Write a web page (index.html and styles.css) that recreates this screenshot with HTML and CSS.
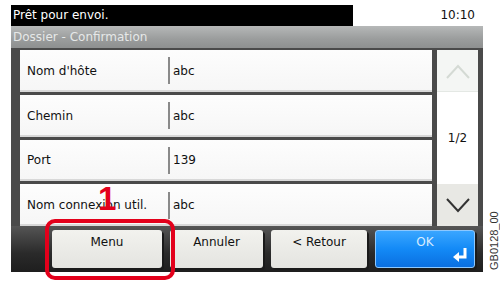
FILE: index.html
```html
<!DOCTYPE html>
<html lang="fr">
<head>
<meta charset="utf-8">
<link rel="stylesheet" href="styles.css">
</head>
<body>
<div class="page">
  <div class="screen">
    <div class="status">
      <div class="status-msg">Prêt pour envoi.</div>
      <div class="clock">10:10</div>
    </div>
    <div class="title">Dossier - Confirmation</div>
    <div class="body">
      <div class="rows">
        <div class="row"><span class="label">Nom d'hôte</span><span class="sep"></span><span class="value">abc</span></div>
        <div class="row"><span class="label">Chemin</span><span class="sep"></span><span class="value">abc</span></div>
        <div class="row"><span class="label">Port</span><span class="sep"></span><span class="value">139</span></div>
        <div class="row"><span class="label">Nom connexion util.</span><span class="sep"></span><span class="value">abc</span></div>
      </div>
      <div class="scroll">
        <div class="sbtn up">
          <svg width="24" height="16" viewBox="0 0 24 16"><polyline points="1,15 12,3 23,15" fill="none" stroke="#d4dad4" stroke-width="2"/></svg>
        </div>
        <div class="pager">1/2</div>
        <div class="sbtn down">
          <svg width="24" height="16" viewBox="0 0 24 16"><polyline points="1,2 12,14 23,2" fill="none" stroke="#333" stroke-width="2"/></svg>
        </div>
      </div>
    </div>
    <div class="footer">
      <div class="btn btn-menu">Menu</div>
      <div class="btn btn-cancel">Annuler</div>
      <div class="btn btn-back">&lt; Retour</div>
      <div class="btn btn-ok">OK
        <svg class="enter" width="16" height="14" viewBox="0 0 16 14"><path d="M13 0 V9 H6" fill="none" stroke="#fff" stroke-width="3"/><polygon points="1,9 7,4 7,14" fill="#fff"/></svg>
      </div>
    </div>
  </div>
  <div class="callout-num">1</div>
  <div class="callout-box"></div>
  <div class="code">GB0128_00</div>
</div>
</body>
</html>
```
FILE: styles.css
```css
html, body {
  margin: 0;
  padding: 0;
  background: #fff;
}
.page {
  position: relative;
  width: 500px;
  height: 282px;
  overflow: hidden;
  font-family: "DejaVu Sans", Verdana, sans-serif;
  font-size: 12px;
  color: #111;
}
.screen {
  position: absolute;
  left: 11px;
  top: 5px;
  width: 472px;
  display: flex;
  flex-direction: column;
}
.status {
  height: 21px;
  display: flex;
  align-items: stretch;
}
.status-msg {
  width: 342px;
  background: #000;
  color: #fff;
  padding-left: 2px;
  line-height: 21px;
  box-sizing: border-box;
}
.clock {
  flex: 1;
  text-align: right;
  padding-right: 8px;
  line-height: 21px;
  color: #111;
}
.title {
  height: 22px;
  line-height: 22px;
  padding-left: 2px;
  color: #e6e8e8;
  background: linear-gradient(#b6b8b8, #9a9c9c 60%, #8e9090);
}
.body {
  height: 178px;
  background: #4a4a4a;
  display: flex;
  padding: 2px 5px 0 9px;
  box-sizing: border-box;
  gap: 5px;
}
.rows {
  width: 412px;
  display: flex;
  flex-direction: column;
  gap: 3px;
}
.row {
  height: 42px;
  background: linear-gradient(#fdfdfd, #f6f6f6);
  box-shadow: inset 0 -2px 0 #d8d8d8;
  display: flex;
  align-items: center;
  padding-left: 7px;
}
.label {
  width: 141px;
}
.sep {
  width: 2px;
  height: 27px;
  background: #8a8a8a;
  margin-right: 3px;
}
.scroll {
  width: 41px;
  background: #fff;
  display: flex;
  flex-direction: column;
}
.sbtn {
  height: 42px;
  display: flex;
  align-items: center;
  justify-content: center;
}
.sbtn.up {
  background: #f4f6f4;
  border-bottom: 1px solid #e4e8e4;
  height: 41px;
}
.sbtn.down {
  background: #e8e8e4;
  margin-top: auto;
}
.pager {
  flex: 1;
  display: flex;
  align-items: center;
  justify-content: center;
}
.footer {
  height: 46px;
  background: linear-gradient(#555, #2a2a2a 60%, #1e1e1e);
  display: flex;
  padding: 4px 0 0 41px;
  box-sizing: border-box;
  gap: 8px;
}
.btn {
  height: 38px;
  box-sizing: border-box;
  border-radius: 3px;
  background: linear-gradient(#f2f2ee, #e4e4e0);
  box-shadow: 2px 2px 0 #1a1a1a;
  text-align: center;
  padding-top: 5px;
  position: relative;
}
.btn-menu { width: 110px; }
.btn-cancel { width: 93px; }
.btn-back { width: 96px; }
.btn-ok {
  width: 100px;
  background: linear-gradient(#3aa6ff, #138af6 50%, #0a6fe0);
  border: 1px solid #8cc8ff;
  color: #d8ecff;
  padding-top: 4px;
}
.enter {
  position: absolute;
  right: 6px;
  bottom: 5px;
}
.callout-box {
  position: absolute;
  left: 45px;
  top: 219px;
  width: 130px;
  height: 61px;
  box-sizing: border-box;
  border: 4px solid #e3001b;
  border-radius: 10px;
}
.callout-num {
  position: absolute;
  left: 98px;
  top: 182px;
  font-family: "Liberation Sans", Arial, sans-serif;
  font-weight: bold;
  font-size: 33px;
  line-height: 33px;
  color: #e3001b;
}
.code {
  position: absolute;
  left: 488px;
  top: 270px;
  transform-origin: 0 0;
  transform: rotate(-90deg);
  font-family: "Liberation Sans", Arial, sans-serif;
  font-size: 11px;
  line-height: 12px;
  color: #333;
  white-space: nowrap;
}
```
